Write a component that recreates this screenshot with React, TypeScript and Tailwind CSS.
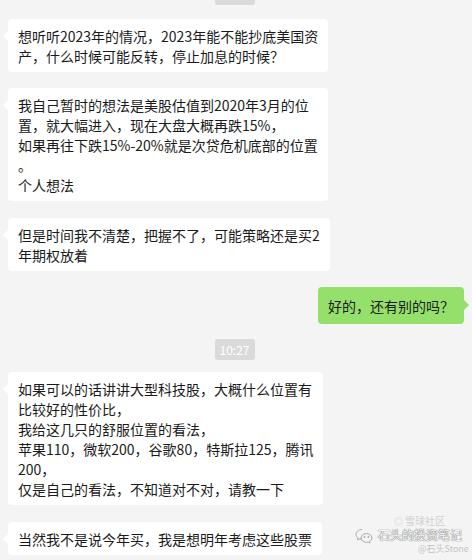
const font = { fontFamily: '"Noto Sans CJK SC", "Noto Sans", sans-serif' };

type BubbleProps = { lines: string[]; className?: string };

const LeftBubble = ({ lines, className = '' }: BubbleProps) => (
  <div className={`relative ml-[8px] w-fit rounded-[4px] bg-white px-[10px] py-[6.5px] ${className}`}>
    <div className="absolute left-[-5px] top-[12px] h-0 w-0 border-y-[5px] border-r-[5px] border-y-transparent border-r-white" />
    {lines.map((l, i) => (
      <div key={i} className="whitespace-nowrap text-[14px] leading-5 text-[#1a1a1a]">
        {l}
      </div>
    ))}
  </div>
);

const TimeStamp = ({ text, className = '' }: { text?: string; className?: string }) => (
  <div className={`flex justify-center ${className}`}>
    <div className="ml-[-3px] flex h-[21px] w-[40px] items-center justify-center rounded-[3px] bg-[#dadada] text-[12px] text-white">
      {text}
    </div>
  </div>
);

const WechatIcon = () => (
  <svg width="18" height="16" viewBox="0 0 18 16" fill="none" stroke="#a8a8a8" strokeWidth="1">
    <path d="M7 1.5C3.7 1.5 1 3.7 1 6.4c0 1.5.8 2.8 2.1 3.7L2.6 12l2.1-1.1c.7.2 1.5.3 2.3.3" />
    <path d="M11.5 5.5c-3 0-5.5 2-5.5 4.4s2.5 4.4 5.5 4.4c.6 0 1.2-.1 1.8-.2l1.7.9-.4-1.5c1.4-.8 2.3-2.1 2.3-3.6 0-2.4-2.5-4.4-5.4-4.4z" />
    <circle cx="9.5" cy="9" r="0.6" fill="#a8a8a8" />
    <circle cx="13.4" cy="9" r="0.6" fill="#a8a8a8" />
  </svg>
);

export default function App() {
  return (
    <div className="relative h-[560px] w-[472px] overflow-hidden bg-[#f4f4f4]" style={font}>
      <div className="flex flex-col">
        {/* previous time stamp, scrolled mostly out of view */}
        <TimeStamp className="mt-[-16px]" />

        <LeftBubble
          className="mt-[14px]"
          lines={['想听听2023年的情况，2023年能不能抄底美国资', '产，什么时候可能反转，停止加息的时候？']}
        />

        <LeftBubble
          className="mt-[16px]"
          lines={[
            '我自己暂时的想法是美股估值到2020年3月的位',
            '置，就大幅进入，现在大盘大概再跌15%，',
            '如果再往下跌15%-20%就是次贷危机底部的位置',
            '。',
            '个人想法',
          ]}
        />

        <LeftBubble
          className="mt-[17px]"
          lines={['但是时间我不清楚，把握不了，可能策略还是买2', '年期权放着']}
        />

        <div className="mt-[16px] flex justify-end pr-[8px]">
          <div className="relative rounded-[4px] bg-[#95e06a] px-[10px] py-[8.5px]">
            <div className="absolute right-[-5px] top-[13px] h-0 w-0 border-y-[5px] border-l-[5px] border-y-transparent border-l-[#95e06a]" />
            <div className="whitespace-nowrap text-[14px] leading-5 text-[#1a1a1a]">好的，还有别的吗？</div>
          </div>
        </div>

        <TimeStamp text="10:27" className="mt-[15px]" />

        <LeftBubble
          className="mt-[12px]"
          lines={[
            '如果可以的话讲讲大型科技股，大概什么位置有',
            '比较好的性价比，',
            '我给这几只的舒服位置的看法，',
            '苹果110，微软200，谷歌80，特斯拉125，腾讯',
            '200，',
            '仅是自己的看法，不知道对不对，请教一下',
          ]}
        />

        <LeftBubble className="mt-[17px]" lines={['当然我不是说今年买，我是想明年考虑这些股票']} />
      </div>

      {/* watermark */}
      <div className="absolute left-[355px] top-[528px]">
        <WechatIcon />
      </div>
      <div className="absolute left-[394px] top-[516px] flex items-center gap-[2px] text-[10px] leading-none text-[#d0d0d0]">
        <span className="text-[9px]">◎</span>
        <span>雪球社区</span>
      </div>
      <div className="absolute left-[378px] top-[528px] whitespace-nowrap text-[12px] leading-[14px] text-[#fafafa] [text-shadow:0_0_1px_#555,0_0_1px_#777]">
        石头的投资笔记
      </div>
      <div className="absolute left-[418px] top-[544px] whitespace-nowrap text-[9px] leading-none text-[#c4c4c4]">
        @石头Stone
      </div>
    </div>
  );
}
